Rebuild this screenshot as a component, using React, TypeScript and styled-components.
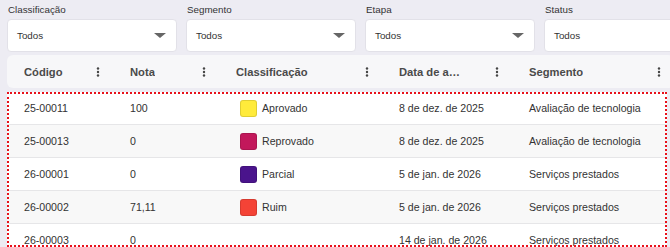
import { createGlobalStyle } from "styled-components";
import styled from "styled-components";

const GlobalStyle = createGlobalStyle`
  html, body {
    margin: 0;
    padding: 0;
    background: #edecf3;
    overflow: hidden;
  }
  body {
    font-family: "Liberation Sans", Arial, sans-serif;
  }
`;

const COLUMNS = "106px 106px 163px 130px 162px";

const filters = ["Classificação", "Segmento", "Etapa", "Status"];
const columns = [
  { title: "Código" },
  { title: "Nota" },
  { title: "Classificação" },
  { title: "Data de aprovação", narrow: true },
  { title: "Segmento" },
];

type Item = {
  code: string;
  score: string;
  label?: string;
  color?: string;
  date: string;
  segment: string;
};

const rows: Item[] = [
  { code: "25-00011", score: "100", label: "Aprovado", color: "#ffeb3b", date: "8 de dez. de 2025", segment: "Avaliação de tecnologia" },
  { code: "25-00013", score: "0", label: "Reprovado", color: "#c2185b", date: "8 de dez. de 2025", segment: "Avaliação de tecnologia" },
  { code: "26-00001", score: "0", label: "Parcial", color: "#4a148c", date: "5 de jan. de 2026", segment: "Serviços prestados" },
  { code: "26-00002", score: "71,11", label: "Ruim", color: "#f44336", date: "5 de jan. de 2026", segment: "Serviços prestados" },
  { code: "26-00003", score: "0", date: "14 de jan. de 2026", segment: "Serviços prestados" },
];

const MoreVert = () => (
  <svg width="4" height="12" viewBox="0 0 4 12">
    <circle cx="2" cy="2.5" r="1.2" fill="#444" />
    <circle cx="2" cy="6" r="1.2" fill="#444" />
    <circle cx="2" cy="9.5" r="1.2" fill="#444" />
  </svg>
);

const App = () => {
  return (
    <>
      <GlobalStyle />
      <Page>
        <Filters>
          {filters.map((f) => (
            <Filter key={f}>
              <Label>{f}</Label>
              <Select>
                <span>Todos</span>
                <Arrow />
              </Select>
            </Filter>
          ))}
        </Filters>

        <HeaderBar>
          {columns.map((c) => (
            <HeaderCell key={c.title}>
              <HeaderTitle $narrow={!!c.narrow}>{c.title}</HeaderTitle>
              <MoreVert />
            </HeaderCell>
          ))}
        </HeaderBar>

        <Body>
          {rows.map((r, i) => (
            <Row key={r.code} $striped={i % 2 === 1}>
              <Cell>{r.code}</Cell>
              <Cell>{r.score}</Cell>
              <Cell>
                {r.label && (
                  <>
                    <Swatch $color={r.color!} />
                    {r.label}
                  </>
                )}
              </Cell>
              <Cell>{r.date}</Cell>
              <Cell>{r.segment}</Cell>
            </Row>
          ))}
        </Body>
      </Page>
    </>
  );
};

export default App;

const Page = styled.div`
  padding: 4px 0 0 7px;
  width: 670px;
  height: 247px;
  box-sizing: border-box;
  overflow: hidden;
`;

const Filters = styled.div`
  display: flex;
  gap: 9px;
`;

const Filter = styled.div`
  width: 170px;
  flex-shrink: 0;
`;

const Label = styled.div`
  font-size: 9.8px;
  line-height: 12px;
  color: #333;
  margin-bottom: 3px;
  padding-left: 1px;
`;

const Select = styled.div`
  height: 33px;
  box-sizing: border-box;
  background: #fff;
  border: 1px solid #e2e1e8;
  border-radius: 4px;
  display: flex;
  align-items: center;
  justify-content: space-between;
  padding: 0 10px 0 9px;
  font-size: 9.8px;
  color: #333;
`;

const Arrow = styled.span`
  width: 0;
  height: 0;
  border-left: 6px solid transparent;
  border-right: 6px solid transparent;
  border-top: 5px solid #666;
`;

const HeaderBar = styled.div`
  display: grid;
  grid-template-columns: ${COLUMNS};
  width: max-content;
  height: 33px;
  margin-top: 3px;
  background: #f7f7f9;
  border-radius: 6px;
`;

const HeaderCell = styled.div`
  display: flex;
  align-items: center;
  justify-content: space-between;
  padding: 0 13px 0 17px;
  min-width: 0;
`;

const HeaderTitle = styled.div<{ $narrow: boolean }>`
  font-size: 11.2px;
  font-weight: bold;
  color: #4a4a4a;
  white-space: nowrap;
  overflow: hidden;
  text-overflow: ellipsis;
  max-width: ${(p) => (p.$narrow ? "61px" : "none")};
`;

const Body = styled.div`
  margin-top: 4px;
  width: 660px;
  height: 155px;
  background: #fff;
  overflow: hidden;
  outline: 2px dotted #e8111b;
  outline-offset: -2px;
`;

const Row = styled.div<{ $striped: boolean }>`
  display: grid;
  grid-template-columns: ${COLUMNS};
  height: 33px;
  box-sizing: border-box;
  border-bottom: 1px solid #e6e6e8;
  background: ${(p) => (p.$striped ? "#f8f8f8" : "#fff")};
`;

const Cell = styled.div`
  display: flex;
  align-items: center;
  padding-left: 17px;
  font-size: 10.6px;
  color: #333;
  white-space: nowrap;
  overflow: hidden;
`;

const Swatch = styled.span<{ $color: string }>`
  width: 17px;
  height: 17px;
  box-sizing: border-box;
  border-radius: 3px;
  border: 1px solid rgba(0, 0, 0, 0.12);
  background: ${(p) => p.$color};
  margin: 0 5px 0 4px;
  flex-shrink: 0;
`;
